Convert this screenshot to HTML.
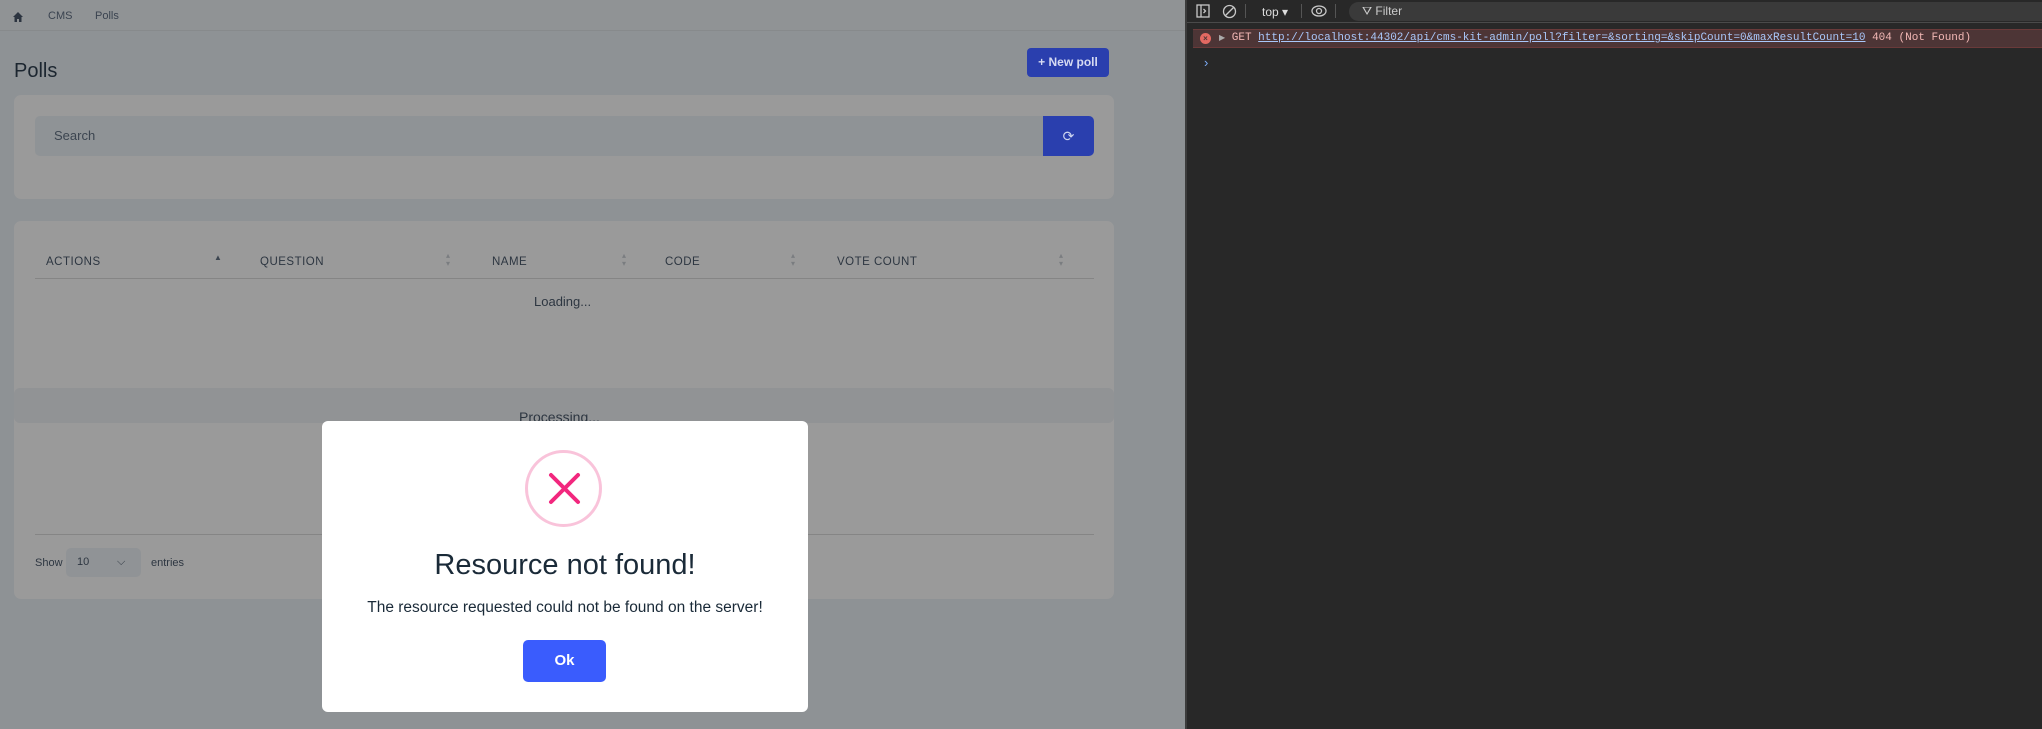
<!DOCTYPE html>
<html><head><meta charset="utf-8"><style>
*{box-sizing:border-box;margin:0;padding:0}
body{width:2042px;height:729px;overflow:hidden;font-family:"Liberation Sans",sans-serif;position:relative;background:#8d9194}
.left{position:absolute;left:0;top:0;width:1185px;height:729px;background:#8e9295}
.bc{position:absolute;left:0;top:0;width:1185px;height:31px;background:#909395;border-bottom:1px solid #878a8c}
.t{position:absolute;white-space:nowrap}
.card{position:absolute;left:14px;width:1100px;background:#9a9a9a;border-radius:7px}
.dt{position:absolute;left:1185px;top:0;width:857px;height:729px;background:#282828;border-left:2px solid #3c3c3c}
.mono{font-family:"Liberation Mono",monospace;font-size:11px}
.h{font-size:11.5px;color:#2d3641;letter-spacing:.5px;top:35px}
.s{font-size:8px;line-height:8px;color:#7a7d80;top:31px}
</style></head><body>
<div class="left">
 <div class="bc">
  <svg style="position:absolute;left:13px;top:12px" width="10" height="10" viewBox="0 0 10 10"><path d="M5 0L0 5h1.5v5h2.5V7h2v3h2.5V5H10z" fill="#2c3440"/></svg>
  <div class="t" style="left:48px;top:10px;font-size:11px;color:#3a4350">CMS</div>
  <div class="t" style="left:95px;top:10px;font-size:11px;color:#3a4350">Polls</div>
 </div>
 <div class="t" style="left:14px;top:60px;font-size:20px;color:#1c2630">Polls</div>
 <div class="t" style="left:1027px;top:48px;width:82px;height:29px;background:#2a3fae;border-radius:4px;color:#d6dbf2;font-size:12px;font-weight:bold;line-height:29px;text-align:center">+ New poll</div>
 <div class="card" style="top:95px;height:104px">
  <div class="t" style="left:21px;top:21px;width:1008px;height:40px;background:#8f9396;border-radius:5px 0 0 5px;font-size:13px;color:#3c4550;line-height:40px;padding-left:19px">Search</div>
  <div class="t" style="left:1029px;top:21px;width:51px;height:40px;background:#2a3fae;border-radius:0 5px 5px 0;color:#cfd6f0;text-align:center;line-height:40px;font-size:14px">⟳</div>
 </div>
 <div class="card" style="top:221px;height:378px">
  <div class="t h" style="left:32px">ACTIONS</div>
  <div class="t" style="left:200px;top:32px;font-size:8px;color:#3c4550">▲</div>
  <div class="t h" style="left:246px">QUESTION</div>
  <div class="t h" style="left:478px">NAME</div>
  <div class="t h" style="left:651px">CODE</div>
  <div class="t h" style="left:823px">VOTE COUNT</div>
  <div class="t s" style="left:432px">▴<br>▾</div>
  <div class="t s" style="left:608px">▴<br>▾</div>
  <div class="t s" style="left:777px">▴<br>▾</div>
  <div class="t s" style="left:1045px">▴<br>▾</div>
  <div class="t" style="left:21px;top:57px;width:1059px;height:1px;background:#858585"></div>
  <div class="t" style="left:520px;top:73px;font-size:13px;color:#2d3641">Loading...</div>
  <div class="t" style="left:21px;top:313px;width:1059px;height:1px;background:#858585"></div>
  <div class="t" style="left:21px;top:336px;font-size:11px;color:#2d3641">Show</div>
  <div class="t" style="left:52px;top:327px;width:75px;height:29px;background:#909396;border-radius:5px;font-size:11px;color:#2d3641;line-height:29px;padding-left:11px">10<span style="position:absolute;left:51px">⌵</span></div>
  <div class="t" style="left:137px;top:336px;font-size:11px;color:#2d3641">entries</div>
 </div>
 <div class="t" style="left:14px;top:388px;width:1100px;height:35px;background:#919395;border-radius:6px"></div>
 <div class="t" style="left:519px;top:409px;font-size:14px;color:#2d3641">Processing...</div>
</div>
<div class="t" style="left:322px;top:421px;width:486px;height:291px;background:#fff;border-radius:6px"></div>
<div class="t" style="left:525px;top:450px;width:77px;height:77px;border:3px solid #f9c3da;border-radius:50%"></div>
<svg class="t" style="left:547px;top:471px" width="35" height="35" viewBox="0 0 35 35"><path d="M4 4L31 31M31 4L4 31" stroke="#f2277e" stroke-width="4" stroke-linecap="round"/></svg>
<div class="t" style="left:322px;top:549px;width:486px;text-align:center;font-size:29px;color:#1a2a38">Resource not found!</div>
<div class="t" style="left:322px;top:599px;width:486px;text-align:center;font-size:15.5px;color:#1a2a38">The resource requested could not be found on the server!</div>
<div class="t" style="left:523px;top:640px;width:83px;height:42px;background:#3a5cfd;border-radius:5px;color:#fff;font-weight:bold;font-size:15px;line-height:42px;text-align:center">Ok</div>
<div class="dt">
 <div class="t" style="left:0;top:0;width:857px;height:23px;border-bottom:1px solid #4a4a4a;background:#282828"></div>
 <svg class="t" style="left:9px;top:4px" width="14" height="14" viewBox="0 0 14 14"><rect x="1" y="1" width="12" height="12" fill="none" stroke="#c8c8c8" stroke-width="1.3"/><path d="M5 1v12M7.5 5l2 2-2 2" stroke="#c8c8c8" fill="none" stroke-width="1.3"/></svg>
 <svg class="t" style="left:35px;top:4px" width="15" height="15" viewBox="0 0 15 15"><circle cx="7.5" cy="7.5" r="6" fill="none" stroke="#c8c8c8" stroke-width="1.3"/><path d="M3.5 11.5L11.5 3.5" stroke="#c8c8c8" stroke-width="1.3"/></svg>
 <div class="t" style="left:58px;top:4px;width:1px;height:14px;background:#555"></div>
 <div class="t" style="left:75px;top:5px;font-size:12px;color:#ddd">top ▾</div>
 <div class="t" style="left:114px;top:4px;width:1px;height:14px;background:#555"></div>
 <svg class="t" style="left:124px;top:4px" width="16" height="14" viewBox="0 0 16 14"><ellipse cx="8" cy="7" rx="7" ry="5" fill="none" stroke="#c8c8c8" stroke-width="1.3"/><circle cx="8" cy="7" r="2.5" fill="none" stroke="#c8c8c8" stroke-width="1.3"/></svg>
 <div class="t" style="left:148px;top:4px;width:1px;height:14px;background:#555"></div>
 <div class="t" style="left:162px;top:2px;width:695px;height:19px;background:#3a3a3a;border-radius:10px 0 0 10px"></div>
 <div class="t" style="left:175px;top:4px;font-size:12px;color:#ccc">⛛ Filter</div>
 <div class="t" style="left:6px;top:29px;width:851px;height:19px;background:#4d3536;border-top:1px solid #6a3a3a;border-bottom:1px solid #6a3a3a"></div>
 <div class="t" style="left:13px;top:33px;width:11px;height:11px;border-radius:50%;background:#e46962;color:#4d3536;font-size:8px;line-height:11px;text-align:center;font-weight:bold">×</div>
 <div class="t mono" style="left:32px;top:32px;color:#f2b8b5"><span style="color:#aaa;font-size:8px">▶</span> GET <span style="color:#a8c7fa;text-decoration:underline">http://localhost:44302/api/cms-kit-admin/poll?filter=&amp;sorting=&amp;skipCount=0&amp;maxResultCount=10</span> 404 (Not Found)</div>
 <div class="t" style="left:17px;top:55px;font-size:13px;color:#7cacf8">›</div>
</div>
</body></html>
